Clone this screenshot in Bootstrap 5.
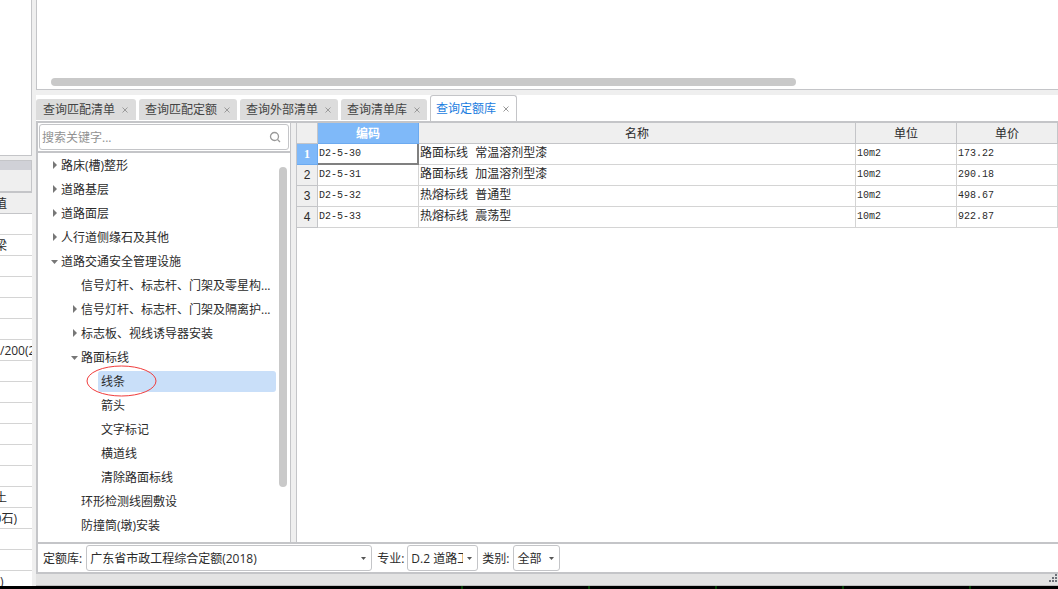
<!DOCTYPE html>
<html lang="zh-CN">
<head>
<meta charset="utf-8">
<meta name="viewport" content="width=device-width, initial-scale=1">
<title>查询定额库</title>
<link rel="stylesheet" href="https://cdn.jsdelivr.net/npm/bootstrap@5.3.0/dist/css/bootstrap.min.css">
<style>
  :root { --line: #c4c5c8; --cell: #d4d4d4; --chrome: #efefef; --pick: #7fb9f9; }
  body { font: 12px/20px "Open Sans", "Noto Sans CJK SC", sans-serif; color: #2b2b2b; background: var(--chrome); }
  button, input, select { font: inherit; color: inherit; }

  /* property pane at the left edge */
  .side-pane { width: 32px; }
  .side-top { height: 156px; border: solid var(--line); border-width: 0 1px 1px 0; }
  .side-caption { height: 10px; background: #d0d1d7; border: 1px solid var(--line); border-width: 1px 1px 0 0; }
  .side-tools { height: 23px; border: solid var(--line); border-width: 0 1px 2px 0; }
  .side-grid { table-layout: fixed; border-collapse: separate; border-spacing: 0; }
  .side-grid th, .side-grid td { height: 21px; padding: 0; font-weight: 400; background: #fff; border-bottom: 1px solid var(--cell); }
  .side-grid th { background: var(--chrome); border-color: var(--line); }
  .side-grid div { display: flex; justify-content: flex-end; height: 20px; line-height: 22px; white-space: nowrap; overflow: hidden; padding-right: 25px; }
  .side-grid .wide-end div { padding-right: 15px; }
  .side-grid .from-start div { justify-content: flex-start; padding: 0; }

  /* upper panel */
  .upper { height: 90px; border: solid var(--line); border-width: 0 0 1px 1px; padding: 0 262px 3px 14px; }
  .bar-thumb { height: 8px; border-radius: 4px; background: #c9c9c9; }

  /* tabs */
  .tab-strip { margin-top: 5px; gap: 3px; height: 26px; border: 0; }
  .tab-box { height: 21px; margin-bottom: 1px; padding: 0 5px 0 6px; gap: 5px; background: #dcdcdc; border-radius: 3px 3px 0 0; color: #444; }
  .tab-box:first-child { padding: 0 6px 0 7px; }
  .tab-box.current { height: 26px; margin: 0; padding: 0 5px; background: #fff; border: 1px solid var(--line); border-bottom: 0; color: #1b7de0; }
  .tab-box a { color: inherit; text-decoration: none; }
  .tab-close { width: 10px; height: 10px; padding: 0; border: 0; background: none; line-height: 0; display: flex; }

  /* workspace */
  .workspace { border: solid var(--line); border-width: 2px 0 0 2px; }
  .tree-pane { width: 253px; border-right: 1px solid var(--line); }
  .search-row { padding: 1px; height: 30px; border-bottom: 2px solid var(--line); }
  .search-box { width: 250px; height: 26px; border: 1px solid var(--line); border-radius: 3px; padding: 0 7px 0 2px; }
  .search-box input { border: 0; outline: 0; padding: 2px 0 0; background: none; min-width: 0; }
  .search-box input::placeholder { color: #929292; opacity: 1; }
  .splitter { width: 5px; }
  .tree-scroll { width: 8px; margin: 14px 3px 55px 0; border-radius: 4px; background: #c9c9c9; }
  .tree-list a { display: flex; align-items: center; height: 24px; color: inherit; text-decoration: none; padding: 2px 0 0 13px; white-space: nowrap; }
  .tree-list .lv1 { padding-left: 33px; }
  .tree-list .lv2 { padding-left: 53px; }
  .tree-list svg.twist { width: 10px; height: 10px; fill: #777; flex: none; }
  .tree-list .selected { height: 21px; margin: 2px 3px 1px 60px; padding: 0 0 0 3px; background: #c9dff9; border-radius: 3px; }
  .ring { left: 48px; top: -6px; width: 71px; height: 32px; pointer-events: none; }

  /* quota table */
  .table-pane { border-left: 1px solid var(--line); }
  .quota { table-layout: fixed; border-collapse: separate; border-spacing: 0; }
  .quota th, .quota td { height: 21px; padding: 1px 0 0 1px; border: solid var(--cell); border-width: 0 1px 1px 0; font-weight: 400; line-height: 19px; white-space: nowrap; }
  .quota thead th, .quota tbody th { background: var(--chrome); border-color: var(--line); text-align: center; padding: 1px 0 0; }
  .quota thead th { padding-top: 2px; line-height: 18px; }
  .quota tbody th { font-family: "Liberation Sans", sans-serif; }
  .quota thead .picked, .quota tbody .picked { background: var(--pick); border-color: #6caaf0; color: #fff; font-weight: 700; }
  .quota tbody th.picked { font-family: "Liberation Serif", serif; }
  .quota td { font: 10px/18px "Liberation Mono", monospace; vertical-align: top; }
  .quota td.label-cell { font: 12px/18px "Liberation Mono", "Noto Sans CJK SC", monospace; }
  .quota td.focus-cell { border: solid #808080; border-width: 0 2px 2px 0; }

  /* filters and status */
  .filter-bar { border: solid var(--line); border-width: 2px 0 2px 2px; padding: 1px 5px; }
  .filter-bar label { padding-top: 2px; }
  .filter-bar select { height: 26px; border: 1px solid var(--line); border-radius: 3px; padding: 2px 14px 0 3px; appearance: none; line-height: 20px;
    background: #fff url("data:image/svg+xml,%3Csvg xmlns='http://www.w3.org/2000/svg' width='5' height='3'%3E%3Cpath d='M0 0h5L2.500 3z' fill='%23555'/%3E%3C/svg%3E") no-repeat right 5px center; }
  .filter-bar .pick-library { width: 286px; margin: 0 5px 0 4px; }
  .filter-bar .pick-major { width: 71px; margin: 0 4px 0 3px; }
  .filter-bar .pick-kind { width: 47px; margin-left: 4px; }
  .status { height: 12px; background: #e3e3e3; border-bottom: 1px solid #c0c0c0; }
  .canvas-edge { height: 3px; background: #000; padding-left: 461px; }
  .canvas-edge i { flex: 0 0 127px; border-left: 2px solid #053f05; }
</style>
</head>
<body class="d-flex flex-column vh-100 overflow-hidden">
<svg class="d-none" aria-hidden="true">
  <symbol id="shut" viewBox="0 0 10 10"><path d="M2.500 2.500l5 5M7.500 2.500l-5 5" stroke="#9a9a9a" fill="none"/></symbol>
  <symbol id="right" viewBox="0 0 10 10"><path d="M2 0l4 4-4 4z"/></symbol>
  <symbol id="down" viewBox="0 0 10 10"><path d="M0 3h7L3.500 7z"/></symbol>
</svg>

<div class="d-flex flex-grow-1 overflow-hidden" style="min-height:0">
  <aside class="side-pane flex-shrink-0 me-1 overflow-hidden">
    <div class="side-top bg-white mb-1"></div>
    <div class="side-caption"></div>
    <div class="side-tools"></div>
    <table class="side-grid w-100">
      <thead><tr><th><div>值</div></th></tr></thead>
      <tbody>
        <tr><td></td></tr>
        <tr><td><div>梁</div></td></tr>
        <tr><td></td></tr><tr><td></td></tr><tr><td></td></tr><tr><td></td></tr>
        <tr class="from-start"><td><div>/200(2</div></td></tr>
        <tr><td></td></tr><tr><td></td></tr><tr><td></td></tr><tr><td></td></tr><tr><td></td></tr><tr><td></td></tr>
        <tr><td><div>土</div></td></tr>
        <tr class="wide-end"><td><div>0石)</div></td></tr>
        <tr><td></td></tr><tr><td></td></tr>
        <tr class="from-start"><td><div>)</div></td></tr>
      </tbody>
    </table>
  </aside>

  <main class="d-flex flex-column flex-grow-1" style="min-width:0">
    <section class="upper bg-white d-flex flex-column justify-content-end flex-shrink-0"><div class="bar-thumb"></div></section>

    <nav class="tab-strip nav bg-white d-flex flex-nowrap align-items-end flex-shrink-0">
      <div class="tab-box d-flex align-items-center"><a href="#">查询匹配清单</a><button class="tab-close" aria-label="关闭"><svg width="10" height="10"><use href="#shut"/></svg></button></div>
      <div class="tab-box d-flex align-items-center"><a href="#">查询匹配定额</a><button class="tab-close" aria-label="关闭"><svg width="10" height="10"><use href="#shut"/></svg></button></div>
      <div class="tab-box d-flex align-items-center"><a href="#">查询外部清单</a><button class="tab-close" aria-label="关闭"><svg width="10" height="10"><use href="#shut"/></svg></button></div>
      <div class="tab-box d-flex align-items-center"><a href="#">查询清单库</a><button class="tab-close" aria-label="关闭"><svg width="10" height="10"><use href="#shut"/></svg></button></div>
      <div class="tab-box current d-flex align-items-center"><a href="#" aria-current="page">查询定额库</a><button class="tab-close" aria-label="关闭"><svg width="10" height="10"><use href="#shut"/></svg></button></div>
    </nav>

    <div class="workspace d-flex flex-grow-1" style="min-height:0">
      <section class="tree-pane bg-white d-flex flex-column flex-shrink-0">
        <div class="search-row">
          <div class="search-box d-flex align-items-center">
            <input class="flex-grow-1" type="text" placeholder="搜索关键字..." aria-label="搜索关键字">
            <svg width="12" height="12" viewBox="0 0 12 12" fill="none" stroke="#999" stroke-width="1.300"><circle cx="5.500" cy="5.500" r="4"/><path d="M8.500 8.500l2.500 2.500"/></svg>
          </div>
        </div>
        <div class="d-flex flex-grow-1 overflow-hidden">
          <ul class="tree-list list-unstyled flex-grow-1 mb-0">
            <li><a href="#"><svg class="twist"><use href="#right"/></svg>路床(槽)整形</a></li>
            <li><a href="#"><svg class="twist"><use href="#right"/></svg>道路基层</a></li>
            <li><a href="#"><svg class="twist"><use href="#right"/></svg>道路面层</a></li>
            <li><a href="#"><svg class="twist"><use href="#right"/></svg>人行道侧缘石及其他</a></li>
            <li><a href="#"><svg class="twist"><use href="#down"/></svg>道路交通安全管理设施</a></li>
            <li><a href="#" class="lv1"><svg class="twist"></svg>信号灯杆、标志杆、门架及零星构...</a></li>
            <li><a href="#" class="lv1"><svg class="twist"><use href="#right"/></svg>信号灯杆、标志杆、门架及隔离护...</a></li>
            <li><a href="#" class="lv1"><svg class="twist"><use href="#right"/></svg>标志板、视线诱导器安装</a></li>
            <li><a href="#" class="lv1"><svg class="twist"><use href="#down"/></svg>路面标线</a></li>
            <li class="position-relative d-flow-root"><a href="#" class="selected">线条</a>
              <svg class="ring position-absolute" viewBox="0 0 71 32" fill="none" stroke="#f03c3c"><ellipse cx="35.500" cy="16" rx="34.500" ry="15"/></svg></li>
            <li><a href="#" class="lv2"><svg class="twist"></svg>箭头</a></li>
            <li><a href="#" class="lv2"><svg class="twist"></svg>文字标记</a></li>
            <li><a href="#" class="lv2"><svg class="twist"></svg>横道线</a></li>
            <li><a href="#" class="lv2"><svg class="twist"></svg>清除路面标线</a></li>
            <li><a href="#" class="lv1"><svg class="twist"></svg>环形检测线圈敷设</a></li>
            <li><a href="#" class="lv1"><svg class="twist"></svg>防撞筒(墩)安装</a></li>
          </ul>
          <div class="tree-scroll flex-shrink-0"></div>
        </div>
      </section>
      <div class="splitter flex-shrink-0"></div>
      <section class="table-pane bg-white flex-grow-1">
        <table class="quota w-100">
          <colgroup><col style="width:21px"><col style="width:101px"><col><col style="width:101px"><col style="width:101px"></colgroup>
          <thead><tr><th></th><th class="picked">编码</th><th>名称</th><th>单位</th><th>单价</th></tr></thead>
          <tbody>
            <tr><th class="picked">1</th><td class="focus-cell">D2-5-30</td><td class="label-cell">路面标线 常温溶剂型漆</td><td>10m2</td><td>173.22</td></tr>
            <tr><th>2</th><td>D2-5-31</td><td class="label-cell">路面标线 加温溶剂型漆</td><td>10m2</td><td>290.18</td></tr>
            <tr><th>3</th><td>D2-5-32</td><td class="label-cell">热熔标线 普通型</td><td>10m2</td><td>498.67</td></tr>
            <tr><th>4</th><td>D2-5-33</td><td class="label-cell">热熔标线 震荡型</td><td>10m2</td><td>922.87</td></tr>
          </tbody>
        </table>
      </section>
    </div>

    <form class="filter-bar bg-white d-flex align-items-center flex-shrink-0">
      <label for="library">定额库:</label>
      <select id="library" class="pick-library"><option>广东省市政工程综合定额(2018)</option></select>
      <label for="major">专业:</label>
      <select id="major" class="pick-major"><option>D.2 道路工程</option></select>
      <label for="kind">类别:</label>
      <select id="kind" class="pick-kind"><option>全部</option></select>
    </form>
    <footer class="status d-flex justify-content-end flex-shrink-0">
      <svg width="9" height="9" fill="#6c7078"><path d="M6 0h2v2H6zM3 3h2v2H3zM6 3h2v2H6zM0 6h2v2H0zM3 6h2v2H3zM6 6h2v2H6z"/></svg>
    </footer>
  </main>
</div>
<div class="canvas-edge d-flex flex-shrink-0 overflow-hidden"><i></i><i></i><i></i><i></i><i></i></div>
<script src="https://cdn.jsdelivr.net/npm/bootstrap@5.3.0/dist/js/bootstrap.bundle.min.js"></script>
</body>
</html>
